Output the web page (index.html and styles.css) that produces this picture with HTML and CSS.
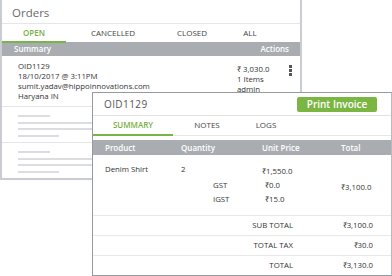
FILE: index.html
```html
<!DOCTYPE html>
<html>
<head>
<meta charset="utf-8">
<link rel="stylesheet" href="styles.css">
</head>
<body>
<div class="stage">
  <section class="orders">
    <header class="orders-head">Orders</header>
    <nav class="orders-tabs">
      <span class="tab active">OPEN</span>
      <span class="tab">CANCELLED</span>
      <span class="tab">CLOSED</span>
      <span class="tab">ALL</span>
    </nav>
    <div class="orders-bar"><span>Summary</span><span>Actions</span></div>
    <div class="order-row">
      <div class="order-info">
        <div>OID1129</div>
        <div>18/10/2017 @ 3:11PM</div>
        <div>sumit.yadav@hippoinnovations.com</div>
        <div>Haryana IN</div>
      </div>
      <div class="order-meta">
        <div>₹ 3,030.0</div>
        <div>1 Items</div>
        <div>admin</div>
      </div>
      <div class="kebab"><i></i><i></i><i></i></div>
    </div>
    <div class="ph-row">
      <span class="ph w1"></span><span class="ph w2"></span><span class="ph w2"></span><span class="ph w3"></span>
    </div>
    <div class="ph-row">
      <span class="ph w1"></span><span class="ph w2"></span><span class="ph w2"></span><span class="ph w3"></span>
    </div>
  </section>

  <section class="detail">
    <header class="detail-head">
      <span class="oid">OID1129</span>
      <button class="print">Print Invoice</button>
    </header>
    <nav class="detail-tabs">
      <span class="tab active">SUMMARY</span>
      <span class="tab">NOTES</span>
      <span class="tab">LOGS</span>
    </nav>
    <div class="detail-bar">
      <span>Product</span><span>Quantity</span><span>Unit Price</span><span>Total</span>
    </div>
    <div class="item">
      <span class="c-prod">Denim Shirt</span>
      <span class="c-qty">2</span>
      <span class="c-price">₹1,550.0</span>
      <span class="c-label r2">GST</span>
      <span class="c-price tax r2">₹0.0</span>
      <span class="c-label r3">IGST</span>
      <span class="c-price tax r3">₹15.0</span>
      <span class="c-total">₹3,100.0</span>
    </div>
    <div class="sum-row"><span>SUB TOTAL</span><span>₹3,100.0</span></div>
    <div class="sum-row"><span>TOTAL TAX</span><span>₹30.0</span></div>
    <div class="sum-row last"><span>TOTAL</span><span>₹3,130.0</span></div>
  </section>
</div>
</body>
</html>
```

FILE: styles.css
```css
* { box-sizing: border-box; margin: 0; padding: 0; }
html, body { background: #fff; }
body {
  font-family: "Open Sans", "Liberation Sans", sans-serif;
  color: #3a3a3a;
  width: 392px;
  height: 276px;
  overflow: hidden;
}
.stage { position: relative; width: 392px; height: 276px; }

/* back card */
.orders {
  width: 302px;
  height: 180px;
  border: 2px solid #c9ccd0;
  border-top: 0;
  background: #fff;
}
.orders-head {
  height: 24px;
  line-height: 25px;
  padding-left: 10px;
  font-size: 11.5px;
  color: #6a6a6a;
  border-bottom: 1px solid #e6e6e6;
}
.orders-tabs {
  display: grid;
  grid-template-columns: 64px 94px 64px 52px;
  height: 18px;
}
.tab {
  text-align: center;
  font-size: 8px;
  color: #444;
  line-height: 17px;
  border-bottom: 2px solid transparent;
}
.tab.active { color: #77b042; font-weight: 600; border-bottom-color: #79b544; }
.orders-bar {
  display: flex;
  justify-content: space-between;
  height: 14px;
  line-height: 14px;
  background: #a9adb1;
  color: #fff;
  font-size: 8px;
  font-weight: 600;
  padding: 0 11px 0 12px;
}
.order-row {
  position: relative;
  display: flex;
  height: 51px;
  padding: 5px 0 0 16px;
  border-bottom: 1px solid #e6e6e6;
  font-size: 7.8px;
  line-height: 10px;
  color: #333;
}
.order-info { width: 219px; }
.order-meta { padding-top: 3px; }
.kebab {
  display: flex;
  flex-direction: column;
  gap: 1px;
  margin: 4px 0 0 20px;
}
.kebab i { display: block; width: 3px; height: 3px; background: #555; }
.ph-row {
  display: flex;
  flex-direction: column;
  gap: 4.5px;
  height: 36px;
  padding: 8px 0 0 16px;
  border-bottom: 1px solid #e6e6e6;
}
.ph-row:last-child { border-bottom: 0; }
.ph { display: block; height: 2px; background: #dcdde0; }
.w1 { width: 32px; }
.w2 { width: 90px; }
.w3 { width: 41px; }

/* front card */
.detail {
  position: absolute;
  left: 92px;
  top: 92px;
  width: 300px;
  height: 184px;
  background: #fff;
  border: 1px solid #959a9f;
  border-right-color: #b6babe;
}
.detail-head {
  display: flex;
  align-items: center;
  justify-content: space-between;
  height: 23px;
  padding: 0 14px 0 11px;
  border-bottom: 1px solid #e3e3e3;
}
.oid { font-size: 10px; color: #555; letter-spacing: 0.4px; }
.print {
  width: 80px;
  height: 15px;
  border: 0;
  border-radius: 2px;
  background: #7bb542;
  color: #fff;
  font-family: inherit;
  font-size: 10px;
  font-weight: 600;
  line-height: 15px;
}
.detail-tabs {
  display: grid;
  grid-template-columns: 80px 68px 50px;
  height: 20px;
  border-bottom: 1px solid #e6e6e6;
  margin-bottom: 4px;
}
.detail-tabs .tab { line-height: 18px; }
.detail-bar, .item {
  display: grid;
  grid-template-columns: 76px 32px 49px 79px 1fr;
  padding-left: 12px;
}
.detail-bar {
  height: 15px;
  line-height: 15px;
  background: #a9adb1;
  color: #fff;
  font-size: 8px;
  font-weight: 600;
}
.detail-bar span:nth-child(2) { grid-column: 2 / 4; }
.item {
  grid-template-rows: 14px 14px 14px;
  height: 61px;
  padding-top: 9px;
  border-bottom: 1px solid #e8e8e8;
  font-size: 7.8px;
  line-height: 14px;
  color: #333;
}
.c-prod { grid-column: 1; grid-row: 1; margin-top: -2px; }
.c-qty { grid-column: 2; grid-row: 1; margin-top: -2px; }
.c-price { grid-column: 4; grid-row: 1; }
.c-label { grid-column: 3; }
.r2 { grid-row: 2; }
.r3 { grid-row: 3; }
.tax { padding-left: 3px; }
.c-total { grid-column: 5; grid-row: 1 / 4; align-self: center; padding-top: 3px; }
.sum-row {
  display: grid;
  grid-template-columns: 200px 80px;
  height: 20px;
  line-height: 19px;
  font-size: 7.8px;
  color: #333;
  text-align: right;
  border-bottom: 1px solid #e8e8e8;
}
.sum-row.last { border-bottom: 0; }
```
